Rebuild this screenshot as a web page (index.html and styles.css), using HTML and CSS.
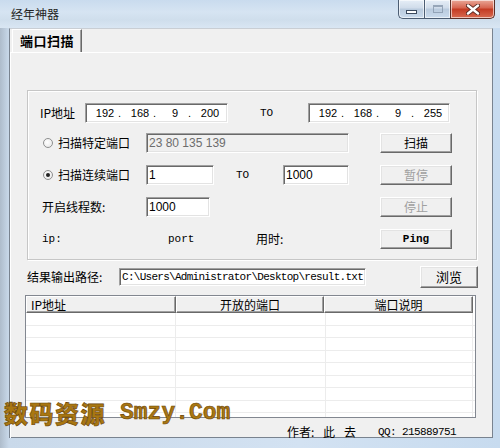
FILE: index.html
```html
<!DOCTYPE html>
<html lang="zh-CN">
<head>
<meta charset="utf-8">
<title>经年神器</title>
<link rel="stylesheet" href="styles.css">
</head>
<body>
<div class="window">
  <div class="titlebar">
    <span class="title">经年神器</span>
    <div class="caption">
      <span class="cb min"><i class="min-glyph"></i></span>
      <span class="cb max"><i class="max-glyph"></i></span>
      <span class="cb close">
        <svg width="14" height="11" viewBox="0 0 14 11"><path d="M2 1.5 L12 9.5 M12 1.5 L2 9.5" stroke="#5a2a22" stroke-width="4.2" stroke-linecap="round"/><path d="M2 1.5 L12 9.5 M12 1.5 L2 9.5" stroke="#fff" stroke-width="2.4" stroke-linecap="round"/></svg>
      </span>
    </div>
  </div>
  <div class="client">
    <div class="tabs"><div class="tab">端口扫描</div></div>
    <div class="panel">
      <div class="group">
        <div class="row r1">
          <span class="lbl w45">IP地址</span>
          <div class="field ip w143"><span>192</span><b>.</b><span>168</span><b>.</b><span>9</span><b>.</b><span>200</span></div>
          <span class="mono to1">TO</span>
          <div class="field ip w142"><span>192</span><b>.</b><span>168</span><b>.</b><span>9</span><b>.</b><span>255</span></div>
        </div>
        <div class="row">
          <span class="radio"></span>
          <span class="lbl rlabel">扫描特定端口</span>
          <div class="field disabled w203">23 80 135 139</div>
          <span class="btn">扫描</span>
        </div>
        <div class="row">
          <span class="radio checked"></span>
          <span class="lbl rlabel">扫描连续端口</span>
          <div class="field w68">1</div>
          <span class="mono to2">TO</span>
          <div class="field w66">1000</div>
          <span class="btn off">暂停</span>
        </div>
        <div class="row">
          <span class="lbl threads">开启线程数:</span>
          <div class="field w64">1000</div>
          <span class="btn off far">停止</span>
        </div>
        <div class="row">
          <span class="mono c-ip">ip:</span>
          <span class="mono c-port">port</span>
          <span class="lbl c-time">用时:</span>
          <span class="btn mono-btn">Ping</span>
        </div>
      </div>
      <div class="pathrow">
        <span class="lbl plabel">结果输出路径:</span>
        <div class="field path">C:\Users\Administrator\Desktop\result.txt</div>
        <span class="btn browse">浏览</span>
      </div>
      <div class="list">
        <div class="lhead">
          <span class="hc c1">IP地址</span>
          <span class="hc c2">开放的端口</span>
          <span class="hc c3">端口说明</span>
        </div>
        <div class="lbody">
          <div class="col c1"></div>
          <div class="col c2"></div>
          <div class="col c3"></div>
        </div>
      </div>
      <div class="footer">
        <span class="author">作者:</span>
        <span class="name n1">此</span>
        <span class="name n2">去</span>
        <span class="qq">QQ: 215889751</span>
      </div>
    </div>
  </div>
  <div class="watermark"><span class="wm-cn">数码资源</span><span class="wm-en">Smzy.Com</span></div>
</div>
</body>
</html>
```

FILE: styles.css
```css
* { box-sizing: border-box; margin: 0; padding: 0; }
html, body { width: 500px; height: 448px; overflow: hidden; }
body {
  font-family: "Noto Sans CJK SC", "Liberation Sans", sans-serif;
  font-size: 12px;
  color: #000;
  background: #c4d8ec;
}
.window {
  position: relative;
  width: 500px;
  height: 448px;
  display: flex;
  flex-direction: column;
  background: linear-gradient(90deg, #aebccb 0, #c9d9ea 9px, #d3e2f2 60%, #c7dbef 100%);
}
.titlebar {
  height: 28px;
  display: flex;
  align-items: flex-start;
  background: linear-gradient(#c9dbee 0, #d6e4f2 12px, #cfdeec 20px, #d9e6f3 28px);
}
.title {
  margin: 6px 0 0 11px;
  font-size: 12px;
  line-height: 16px;
  color: #222;
}
.caption { margin-left: auto; margin-right: 5px; display: flex; height: 19px; }
.cb {
  height: 19px;
  display: flex;
  align-items: center;
  justify-content: center;
  border: 1px solid #4c5d73;
  border-top: none;
  background: linear-gradient(#e6eef7, #d0dcea 45%, #b9cadd 50%, #cadbed);
  box-shadow: inset 0 0 0 1px rgba(255,255,255,0.6);
}
.min { width: 26px; border-radius: 0 0 0 5px; border-right: none; }
.max { width: 26px; border-right: none; }
.close {
  width: 45px;
  border-radius: 0 0 5px 0;
  border-color: #5c3028;
  background: linear-gradient(#e9a898, #d6634e 45%, #c33a22 50%, #d86a50);
}
.min-glyph {
  display: block;
  width: 11px;
  height: 4px;
  margin-top: 5px;
  background: #fff;
  border: 1px solid #3b4a5e;
}
.max-glyph {
  display: block;
  width: 10px;
  height: 8px;
  border: 1px solid #8797ab;
  border-top-width: 2px;
  opacity: 0.8;
}
.client {
  margin: 0 7px 10px 9px;
  height: 410px;
  background: #f0f0f0;
  border: 1px solid #79838f;
  border-top: 1px solid #c9ced4;
  display: flex;
  flex-direction: column;
}
.tabs { height: 23px; display: flex; }
.tab {
  margin-left: 2px;
  width: 70px;
  height: 23px;
  padding-left: 7px;
  font-weight: 700;
  font-size: 13px;
  line-height: 22px;
  letter-spacing: 0.5px;
  border-left: 1px solid #fff;
  border-top: 1px solid #fff;
  border-right: 1px solid #696969;
  box-shadow: inset -1px 0 #a0a0a0;
  background: #f0f0f0;
}
.panel {
  flex: 1;
  border-top: 1px solid #fff;
  border-left: 1px solid #fff;
  display: flex;
  flex-direction: column;
}
.group {
  margin: 37px 0 0 16px;
  width: 450px;
  height: 170px;
  border: 1px solid #c6c6c6;
  box-shadow: inset 1px 1px #fff, 1px 1px #fff;
  padding: 12px 0 0 12px;
  display: flex;
  flex-direction: column;
  gap: 12px;
}
.row { height: 20px; display: flex; align-items: center; flex: none; }
.r1 { margin-bottom: -2px; }
.lbl { font-size: 12px; line-height: 20px; white-space: nowrap; }
.mono { font-family: "Liberation Mono", monospace; font-size: 11px; line-height: 20px; }
.w45 { width: 45px; }
.field {
  height: 20px;
  background: #fff;
  border: 1px solid;
  border-color: #a0a0a0 #fff #fff #a0a0a0;
  box-shadow: inset 1px 1px #696969, inset -1px -1px #e3e3e3;
  font-family: "Liberation Sans", sans-serif;
  font-size: 12px;
  line-height: 18px;
  padding-left: 2px;
  white-space: nowrap;
  overflow: hidden;
}
.ip { display: flex; padding-left: 6px; font-size: 11px; }
.ip span { width: 26px; text-align: center; }
.ip b { font-weight: 400; width: 9px; text-align: left; }
.w143 { width: 143px; }
.w142 { width: 142px; }
.w203 { width: 203px; }
.w68 { width: 68px; }
.w66 { width: 66px; }
.w64 { width: 64px; }
.to1 { margin-left: 32px; width: 48px; }
.to2 { margin-left: 22px; width: 47px; }
.disabled { background: #f0f0f0; color: #6d6d6d; }
.radio {
  margin-left: 3px;
  width: 10px;
  height: 10px;
  border-radius: 50%;
  border: 1px solid #8e8f8f;
  background: radial-gradient(circle at 40% 40%, #fff, #e4e4e4);
  display: flex;
  align-items: center;
  justify-content: center;
}
.radio.checked::after {
  content: "";
  width: 4px;
  height: 4px;
  border-radius: 50%;
  background: #222;
}
.rlabel { margin-left: 5px; width: 88px; }
.btn {
  margin-left: 31px;
  width: 72px;
  height: 20px;
  background: #f0f0f0;
  border: 1px solid;
  border-color: #fff #696969 #696969 #fff;
  box-shadow: inset -1px -1px #a0a0a0, inset 1px 1px #e3e3e3;
  text-align: center;
  font-size: 12px;
  line-height: 18px;
}
.off { color: #a0a0a0; }
.threads { margin-left: 2px; width: 104px; }
.far { margin-left: 170px; }
.c-ip { margin-left: 2px; width: 126px; }
.c-port { width: 88px; }
.c-time { width: 124px; }
.mono-btn { margin-left: 0; font-family: "Liberation Mono", monospace; font-size: 11px; font-weight: 700; }
.pathrow { margin: 6px 0 0 16px; height: 22px; display: flex; align-items: center; }
.plabel { width: 92px; }
.path {
  width: 247px;
  height: 18px;
  line-height: 16px;
  padding-left: 2px;
  font-family: "Liberation Mono", monospace;
  font-size: 11px;
  letter-spacing: -0.72px;
}
.browse { margin-left: 54px; width: 58px; height: 22px; line-height: 20px; font-size: 13px; }
.list {
  margin: 7px 0 0 14px;
  width: 451px;
  height: 123px;
  border: 1px solid #828790;
  background: #fff;
  display: flex;
  flex-direction: column;
}
.lhead { height: 17px; display: flex; flex: none; }
.hc {
  height: 17px;
  background: #f0f0f0;
  border: 1px solid;
  border-color: #fff #696969 #696969 #fff;
  box-shadow: inset -1px -1px #a0a0a0;
  font-size: 12px;
  line-height: 15px;
  text-align: center;
}
.lhead .c1 { width: 150px; text-align: left; padding-left: 4px; }
.lhead .c2 { width: 148px; }
.lhead .c3 { width: 149px; }
.lbody {
  flex: 1;
  display: flex;
  background: repeating-linear-gradient(#fff 0 12px, #ececec 12px 13px, #fff 13px 24px, #ececec 24px 25px);
}
.col { border-right: 1px solid #ececec; }
.lbody .c1 { width: 150px; }
.lbody .c2 { width: 150px; }
.lbody .c3 { width: 147px; }
.footer { margin: 7px 0 0 276px; height: 13px; display: flex; align-items: center; }
.author { font-size: 12px; line-height: 13px; width: 36px; }
.name { font-size: 12px; line-height: 13px; }
.n2 { margin-left: 9px; }
.qq { margin-left: 22px; font-family: "Liberation Mono", monospace; font-size: 11px; letter-spacing: -0.6px; }
.watermark {
  position: absolute;
  left: 4px;
  top: 399px;
  display: flex;
  align-items: center;
  color: #a97712;
  -webkit-text-stroke: 0.6px #6a4306;
  white-space: nowrap;
}
.wm-cn { font-family: "Noto Sans CJK SC", sans-serif; font-weight: 900; font-size: 24px; letter-spacing: 1.5px; line-height: 28px; }
.wm-en { margin-left: 14px; font-family: "Liberation Mono", monospace; font-weight: 700; font-size: 23px; line-height: 28px; }
```
